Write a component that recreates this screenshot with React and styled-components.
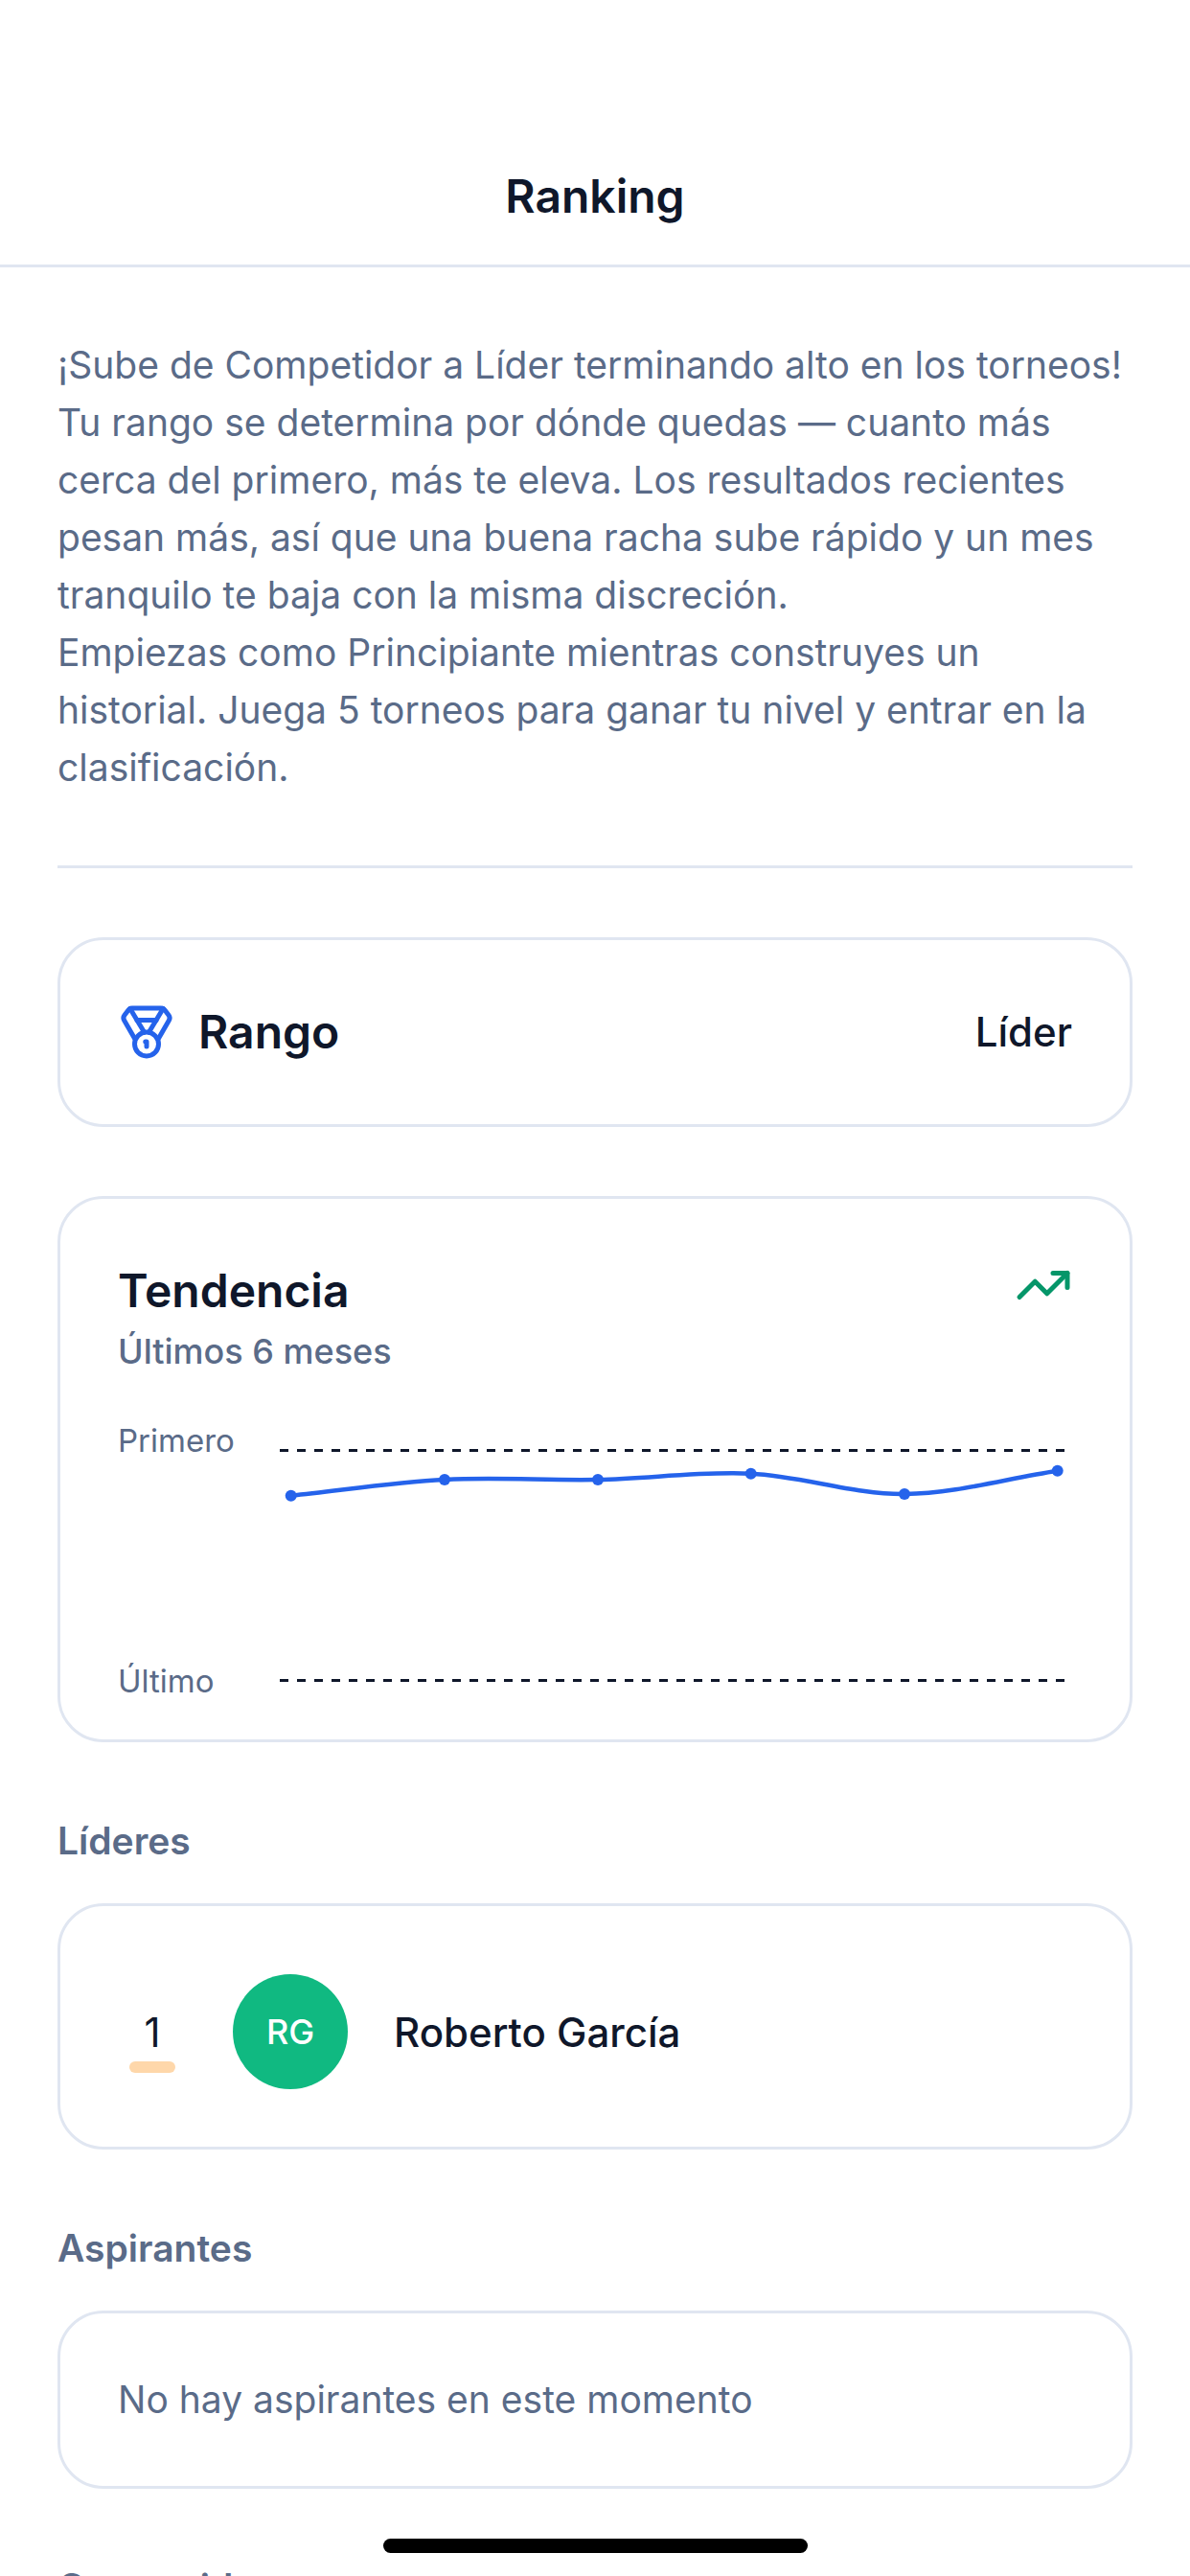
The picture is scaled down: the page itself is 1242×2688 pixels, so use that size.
import React from 'react'
import styled, { createGlobalStyle } from 'styled-components'
import { Medal, TrendingUp } from 'lucide-react'

const INK = '#0f172a'
const MUTED = '#5a6b88'
const LINE = '#e0e6f1'

// chart points in svg coords
const POINTS = [
  [11.7, 48.7],
  [172, 32],
  [332, 32],
  [491.7, 25.7],
  [652, 47],
  [811.7, 22.7],
]

function smoothPath(pts) {
  const tangent = (i) => {
    if (i === 0) return (pts[1][1] - pts[0][1]) / (pts[1][0] - pts[0][0])
    if (i === pts.length - 1) return (pts[i][1] - pts[i - 1][1]) / (pts[i][0] - pts[i - 1][0])
    return (pts[i + 1][1] - pts[i - 1][1]) / (pts[i + 1][0] - pts[i - 1][0])
  }
  let d = `M${pts[0][0]} ${pts[0][1]}`
  for (let i = 0; i < pts.length - 1; i++) {
    const dx = (pts[i + 1][0] - pts[i][0]) / 3
    d += ` C${pts[i][0] + dx} ${pts[i][1] + tangent(i) * dx} ${pts[i + 1][0] - dx} ${pts[i + 1][1] - tangent(i + 1) * dx} ${pts[i + 1][0]} ${pts[i + 1][1]}`
  }
  return d
}

function App() {
  return (
    <>
      <GlobalStyle />
      <Screen>
        <Header>
          <HeaderTitle>Ranking</HeaderTitle>
        </Header>
        <Content>
          <Intro>
            ¡Sube de Competidor a Líder terminando alto en los torneos!<br />
            Tu rango se determina por dónde quedas — cuanto más<br />
            cerca del primero, más te eleva. Los resultados recientes<br />
            pesan más, así que una buena racha sube rápido y un mes<br />
            tranquilo te baja con la misma discreción.<br />
            Empiezas como Principiante mientras construyes un<br />
            historial. Juega 5 torneos para ganar tu nivel y entrar en la<br />
            clasificación.
          </Intro>
          <Divider />
          <RankCard>
            <RankLeft>
              <Medal size={60} color="#2563eb" strokeWidth={2} />
              <CardTitle>Rango</CardTitle>
            </RankLeft>
            <RankValue>Líder</RankValue>
          </RankCard>
          <TrendCard>
            <TrendHead>
              <div>
                <CardTitle>Tendencia</CardTitle>
                <TrendSub>Últimos 6 meses</TrendSub>
              </div>
              <TrendingUp size={60} color="#059669" strokeWidth={2} />
            </TrendHead>
            <ChartRow>
              <ChartLabels>
                <ChartLabel>Primero</ChartLabel>
                <ChartLabel>Último</ChartLabel>
              </ChartLabels>
              <ChartSvg width="826" height="260" viewBox="0 0 826 260">
                <g stroke={INK} strokeWidth="3" strokeDasharray="9 9">
                  <line x1="0" y1="1.5" x2="819" y2="1.5" />
                  <line x1="0" y1="241.5" x2="819" y2="241.5" />
                </g>
                <path d={smoothPath(POINTS)} fill="none" stroke="#2563eb" strokeWidth="4.5" />
                {POINTS.map(([x, y]) => (
                  <circle key={x} cx={x} cy={y} r="6" fill="#2563eb" />
                ))}
              </ChartSvg>
            </ChartRow>
          </TrendCard>
          <SectionTitle>Líderes</SectionTitle>
          <LeaderCard>
            <RankCol>
              <RankNumber>1</RankNumber>
              <RankBar />
            </RankCol>
            <Avatar>RG</Avatar>
            <PlayerName>Roberto García</PlayerName>
          </LeaderCard>
          <SectionTitle>Aspirantes</SectionTitle>
          <EmptyCard>No hay aspirantes en este momento</EmptyCard>
          <SectionTitle>Competidores</SectionTitle>
        </Content>
        <HomeBar />
      </Screen>
    </>
  )
}

export default App

const GlobalStyle = createGlobalStyle`
    html, body {
        margin: 0;
        padding: 0;
        background: #fff;
    }
    body {
        font-family: Inter, "Liberation Sans", sans-serif;
        color: ${INK};
    }
`
const Screen = styled.div`
    position: relative;
    width: 1242px;
    height: 2688px;
    overflow: hidden;
    background: #fff;
`
const Header = styled.header`
    height: 279px;
    box-sizing: border-box;
    border-bottom: 3px solid ${LINE};
    padding-top: 157px;
    text-align: center;
`
const HeaderTitle = styled.h1`
    margin: 0;
    font-size: 48px;
    line-height: 96px;
    font-weight: 600;
    color: ${INK};
`
const Content = styled.main`
    padding: 72px 60px 0;
`
const Intro = styled.p`
    margin: 0;
    font-size: 39px;
    line-height: 60px;
    color: ${MUTED};
    white-space: nowrap;
`
const Divider = styled.hr`
    margin: 72px 0;
    border: 0;
    height: 3px;
    background: ${LINE};
`
const Card = styled.section`
    box-sizing: border-box;
    border: 3px solid ${LINE};
    border-radius: 48px;
    background: #fff;
`
const RankCard = styled(Card)`
    display: flex;
    align-items: center;
    justify-content: space-between;
    padding: 60px;
`
const RankLeft = styled.div`
    display: flex;
    align-items: center;
    gap: 24px;
`
const CardTitle = styled.h2`
    margin: 0;
    font-size: 48px;
    line-height: 72px;
    font-weight: 600;
    color: ${INK};
`
const RankValue = styled.span`
    font-size: 42px;
    line-height: 60px;
    font-weight: 500;
    color: ${INK};
`
const TrendCard = styled(Card)`
    margin-top: 72px;
    padding: 60px 60px 41px;
`
const TrendHead = styled.div`
    display: flex;
    justify-content: space-between;
    align-items: flex-start;
`
const TrendSub = styled.div`
    font-size: 36px;
    line-height: 54px;
    font-weight: 500;
    color: ${MUTED};
`
const ChartRow = styled.div`
    display: flex;
    align-items: flex-start;
    margin-top: 46px;
`
const ChartLabels = styled.div`
    width: 169px;
    height: 291px;
    display: flex;
    flex-direction: column;
    justify-content: space-between;
`
const ChartLabel = styled.span`
    font-size: 33px;
    line-height: 40px;
    color: ${MUTED};
`
const ChartSvg = styled.svg`
    display: block;
    margin-top: 29px;
`
const SectionTitle = styled.h3`
    margin: 76px 0 38px;
    font-size: 39px;
    line-height: 54px;
    font-weight: 600;
    color: ${MUTED};
`
const LeaderCard = styled(Card)`
    display: flex;
    align-items: center;
    gap: 48px;
    padding: 71px 60px 60px;
`
const RankCol = styled.div`
    box-sizing: border-box;
    width: 72px;
    height: 120px;
    padding-top: 31px;
    display: flex;
    flex-direction: column;
    align-items: center;
`
const RankNumber = styled.span`
    font-size: 42px;
    line-height: 60px;
    color: ${INK};
`
const RankBar = styled.span`
    width: 48px;
    height: 12px;
    border-radius: 6px;
    background: #fed7aa;
`
const Avatar = styled.div`
    width: 120px;
    height: 120px;
    border-radius: 50%;
    background: #10b981;
    color: #fff;
    display: flex;
    align-items: center;
    justify-content: center;
    font-size: 36px;
    font-weight: 500;
`
const PlayerName = styled.span`
    padding-top: 2px;
    font-size: 42px;
    line-height: 60px;
    font-weight: 500;
    color: ${INK};
`
const EmptyCard = styled(Card)`
    padding: 60px;
    font-size: 39px;
    line-height: 60px;
    color: ${MUTED};
`
const HomeBar = styled.div`
    position: absolute;
    left: 400px;
    bottom: 24px;
    width: 443px;
    height: 15px;
    border-radius: 8px;
    background: #000;
`
